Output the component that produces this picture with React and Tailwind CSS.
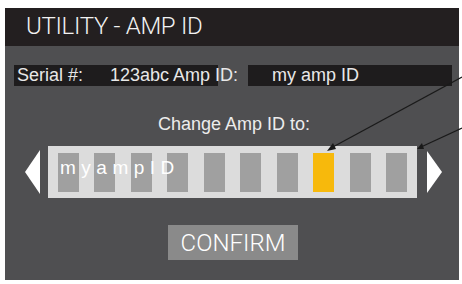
import React from "react";

const cells = [0, 1, 2, 3, 4, 5, 6, 7, 8, 9];
const selected = 7;

export default function App() {
  return (
    <div className="relative w-[462px] h-[284px] bg-white overflow-hidden font-['Roboto',sans-serif]">
      <div className="ml-[5px] mt-[8px] w-[454px] h-[272px] bg-[#4f4f51] flex flex-col">
        {/* Header */}
        <div className="h-[38px] bg-[#231f20] flex items-center pl-[21px] pb-[2px]">
          <h1 className="text-[24px] font-light text-[#f2f2f2] leading-none tracking-[-0.3px]">
            UTILITY - AMP ID
          </h1>
        </div>

        {/* Serial / Amp ID */}
        <div className="mt-[19px] flex items-stretch h-[21px] pl-[9px] text-[18px] leading-[21px] text-[#e8e8e8] font-['Liberation_Sans',sans-serif]">
          <div className="w-[204px] bg-[#1e1c1d] flex whitespace-nowrap pl-[3px]">
            <span>Serial #:</span>
            <span className="ml-[27px] relative z-10">123abc Amp ID:</span>
          </div>
          <div className="w-[30px]" />
          <div className="w-[204px] bg-[#1e1c1d] pl-[24px] whitespace-nowrap">my amp ID</div>
        </div>

        {/* Change label */}
        <div className="mt-[26px] h-[24px] flex items-center justify-center text-[18px] text-[#ececec] font-['Liberation_Sans',sans-serif]">
          <span className="ml-[4px]">Change Amp ID to:</span>
        </div>

        {/* Character strip */}
        <div className="mt-[10px] flex items-center pl-[20px]">
          <svg width="15" height="44" viewBox="0 0 15 44">
            <polygon points="15,0 15,44 0,22" fill="#ffffff" />
          </svg>
          <div className="relative ml-[8px] w-[369px] h-[52px] bg-[#dcdcdc] flex items-center justify-between px-[10px]">
            {cells.map((i) => (
              <div
                key={i}
                className={
                  i === selected
                    ? "w-[21px] h-[39px] bg-[#f7b90c]"
                    : "w-[21px] h-[39px] bg-[#a0a0a0]"
                }
              />
            ))}
            <span className="absolute left-[12px] top-[12px] text-[19px] leading-none tracking-[5.5px] text-white font-['Liberation_Sans',sans-serif]">
              myampID
            </span>
          </div>
          <svg className="ml-[10px]" width="15" height="42" viewBox="0 0 15 42">
            <polygon points="0,0 0,42 15,21" fill="#ffffff" />
          </svg>
        </div>

        {/* Confirm */}
        <div className="mt-[27px] pl-[163px]">
          <button className="w-[130px] h-[35px] bg-[#8a8a8a] text-white text-[24px] font-light leading-none flex items-center justify-center">
            CONFIRM
          </button>
        </div>
      </div>

      {/* Annotation callout lines */}
      <svg className="absolute inset-0 pointer-events-none" width="462" height="284" viewBox="0 0 462 284">
        <line x1="462" y1="77" x2="331" y2="148" stroke="#1a1a1a" strokeWidth="1.2" />
        <polygon points="327,151 333,143 336,149" fill="#1a1a1a" />
        <line x1="462" y1="128" x2="421" y2="147" stroke="#1a1a1a" strokeWidth="1.2" />
        <polygon points="417,149 422,143 424,149" fill="#1a1a1a" />
      </svg>
    </div>
  );
}
